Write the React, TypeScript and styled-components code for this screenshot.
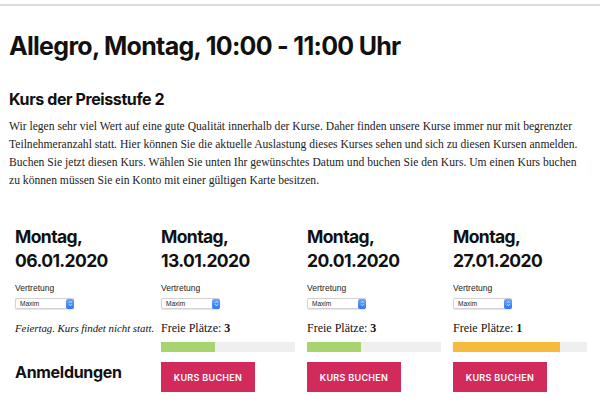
import React from "react";
import styled, { createGlobalStyle } from "styled-components";

const Global = createGlobalStyle`
  html, body { margin: 0; padding: 0; background: #fff; }
  body { font-family: Inter, "Liberation Sans", sans-serif; color: #111; }
`;

const TopRule = styled.div`
  height: 2px;
  margin-top: 4px;
  background: #dcdcdc;
`;

const Page = styled.main`
  padding: 0 9px;
  display: flex;
  flex-direction: column;
`;

const Title = styled.h1`
  margin: 25px 0 0;
  font-size: 25px;
  line-height: 30px;
  font-weight: 700;
  letter-spacing: -0.7px;
`;

const Subtitle = styled.h2`
  margin: 28px 0 0;
  font-size: 16px;
  line-height: 20px;
  font-weight: 700;
  letter-spacing: -0.4px;
`;

const Intro = styled.p`
  margin: 9px 0 0;
  font-family: "Liberation Serif", serif;
  font-size: 11.6px;
  line-height: 18px;
  color: #222;
  white-space: nowrap;
`;

const Grid = styled.section`
  display: grid;
  grid-template-columns: repeat(4, 134px);
  column-gap: 12px;
  margin-top: 35px;
  padding-left: 6px;
`;

const Column = styled.div`
  display: flex;
  flex-direction: column;
  align-items: flex-start;
`;

const DateHead = styled.h3`
  margin: 0;
  font-size: 17.5px;
  line-height: 24px;
  font-weight: 700;
  letter-spacing: -0.6px;
`;

const Label = styled.div`
  margin-top: 10px;
  font-family: "Liberation Sans", sans-serif;
  font-size: 8.5px;
  line-height: 11px;
  color: #222;
`;

const Select = styled.div`
  margin-top: 4px;
  width: 59px;
  height: 11px;
  box-sizing: border-box;
  border: 1px solid #d2d2d2;
  border-radius: 2px;
  display: flex;
  align-items: center;
  justify-content: space-between;
  font-family: "Liberation Sans", sans-serif;
  font-size: 6.5px;
  color: #222;
  padding-left: 4px;
  background: #fff;
  box-shadow: 0 0.5px 1px rgba(0, 0, 0, 0.1);
`;

const Stepper = styled.span`
  width: 8px;
  height: 10px;
  margin-right: -1px;
  border-radius: 2px;
  background: linear-gradient(#6aa6ff, #2f76f0);
  display: flex;
  align-items: center;
  justify-content: center;
`;

const Status = styled.div<{ $italic?: boolean }>`
  margin-top: 12px;
  font-family: "Liberation Serif", serif;
  font-size: ${(p) => (p.$italic ? "10.8px" : "12px")};
  line-height: 14px;
  font-style: ${(p) => (p.$italic ? "italic" : "normal")};
  color: #111;
  white-space: nowrap;
  b { font-weight: 700; }
`;

const Bar = styled.div`
  margin-top: 7px;
  align-self: stretch;
  height: 10px;
  background: #efefef;
  display: flex;
`;

const Fill = styled.div<{ $color: string }>`
  background: ${(p) => p.$color};
  height: 100%;
`;

const Button = styled.button`
  margin-top: 10px;
  width: 94px;
  height: 30px;
  border: none;
  background: #d22b5b;
  color: #fff;
  font-family: Inter, "Liberation Sans", sans-serif;
  font-weight: 600;
  font-size: 9px;
  letter-spacing: 0.3px;
  padding: 0;
  cursor: pointer;
`;

const Registrations = styled.h3`
  margin: 27px 0 0;
  font-size: 16px;
  line-height: 20px;
  font-weight: 700;
  letter-spacing: -0.3px;
`;

const Arrows = () => (
  <svg width="5" height="7" viewBox="0 0 5 7">
    <path d="M1 2.8 L2.5 1.3 L4 2.8 M1 4.2 L2.5 5.7 L4 4.2" stroke="#fff" strokeWidth="0.8" fill="none" />
  </svg>
);

const SelectBox = () => (
  <Select>
    Maxim
    <Stepper>
      <Arrows />
    </Stepper>
  </Select>
);

const courses = [
  { date: "13.01.2020", free: 3, pct: 40, color: "#a8d46f" },
  { date: "20.01.2020", free: 3, pct: 40, color: "#a8d46f" },
  { date: "27.01.2020", free: 1, pct: 80, color: "#f4bb3c" },
];

export default function App() {
  return (
    <>
      <Global />
      <TopRule />
      <Page>
        <Title>Allegro, Montag, 10:00 - 11:00 Uhr</Title>
        <Subtitle>Kurs der Preisstufe 2</Subtitle>
        <Intro>
          Wir legen sehr viel Wert auf eine gute Qualität innerhalb der Kurse. Daher finden unsere Kurse immer nur mit
          begrenzter
          <br />
          Teilnehmeranzahl statt. Hier können Sie die aktuelle Auslastung dieses Kurses sehen und sich zu diesen Kursen
          anmelden.
          <br />
          Buchen Sie jetzt diesen Kurs. Wählen Sie unten Ihr gewünschtes Datum und buchen Sie den Kurs. Um einen Kurs
          buchen
          <br />
          zu können müssen Sie ein Konto mit einer gültigen Karte besitzen.
        </Intro>
        <Grid>
          <Column>
            <DateHead>
              Montag,
              <br />
              06.01.2020
            </DateHead>
            <Label>Vertretung</Label>
            <SelectBox />
            <Status $italic>Feiertag. Kurs findet nicht statt.</Status>
            <Registrations>Anmeldungen</Registrations>
          </Column>
          {courses.map((c) => (
            <Column key={c.date}>
              <DateHead>
                Montag,
                <br />
                {c.date}
              </DateHead>
              <Label>Vertretung</Label>
              <SelectBox />
              <Status>
                Freie Plätze: <b>{c.free}</b>
              </Status>
              <Bar>
                <Fill $color={c.color} style={{ width: `${c.pct}%` }} />
              </Bar>
              <Button>KURS BUCHEN</Button>
            </Column>
          ))}
        </Grid>
      </Page>
    </>
  );
}
